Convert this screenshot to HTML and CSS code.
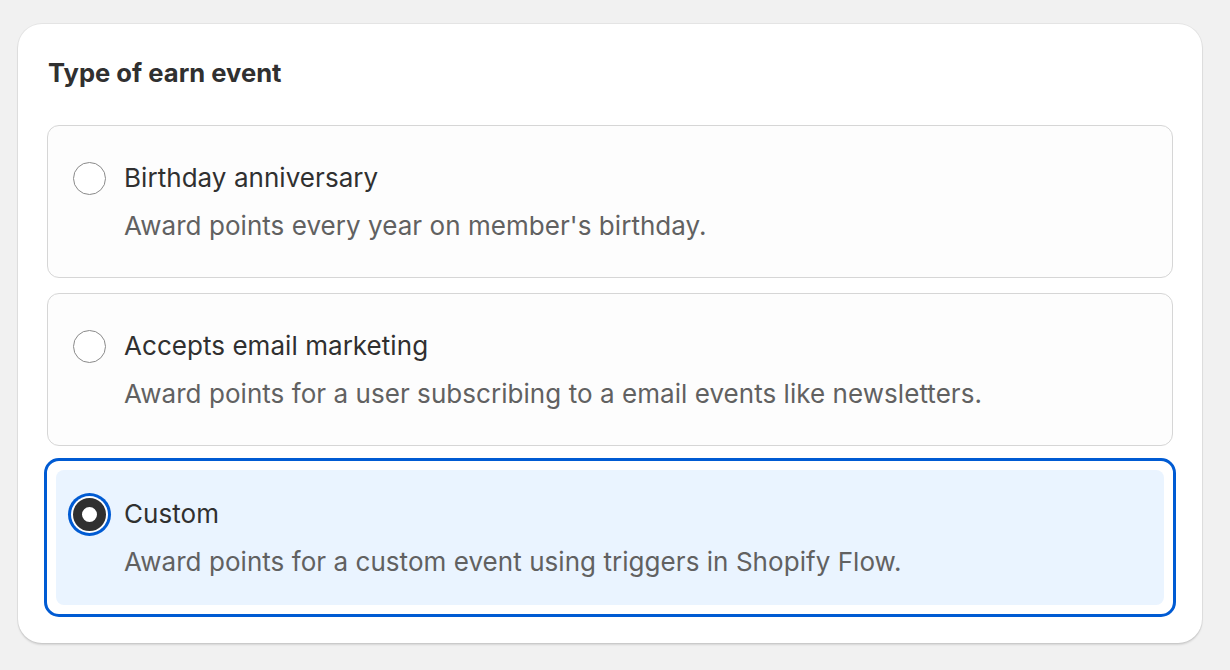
FILE: index.html
```html
<!DOCTYPE html>
<html lang="en">

<head>
    <meta charset="UTF-8">
    <meta name="viewport" content="width=device-width, initial-scale=1.0">
    <title>Type of earn event</title>
    <link rel="stylesheet" href="styles.css">
</head>

<body>
    <div class="card">
        <div class="title">Type of earn event</div>
        <div class="options">
            <label class="option">
                <input type="radio" name="event">
                <span class="text">
                    <span class="label">Birthday anniversary</span>
                    <span class="desc">Award points every year on member's birthday.</span>
                </span>
            </label>
            <label class="option">
                <input type="radio" name="event">
                <span class="text">
                    <span class="label">Accepts email marketing</span>
                    <span class="desc">Award points for a user subscribing to a email events like newsletters.</span>
                </span>
            </label>
            <!-- 选中的选项 -->
            <label class="option selected">
                <input type="radio" name="event" checked>
                <span class="text">
                    <span class="label">Custom</span>
                    <span class="desc">Award points for a custom event using triggers in Shopify Flow.</span>
                </span>
            </label>
        </div>
    </div>
</body>

</html>
```

FILE: styles.css
```css
body {
    margin: 0;
    padding: 24px 28px 26px 18px;
    background-color: #f1f1f1;
    font-family: Inter, "Noto Sans", sans-serif;
    color: #303030;
}

.card {
    background-color: white;
    border-radius: 24px;
    padding: 29px;
    box-shadow: 0 0 0 1px rgba(0, 0, 0, 0.05), 0 2px 2px rgba(0, 0, 0, 0.12);
}

.title {
    font-size: 25.6px;
    font-weight: 650;
    line-height: 40px;
    margin-bottom: 32px;
    padding-left: 1px;
}

.options {
    display: flex;
    flex-direction: column;
    gap: 15px;
}

.option {
    position: relative;
    display: flex;
    align-items: flex-start;
    gap: 18px;
    padding: 32px 25px 31px 25px;
    border: 1px solid #d6d6d6;
    border-radius: 12px;
    background-color: #fdfdfd;
}

.option.selected {
    border-color: white;
    background-color: white;
    outline: 3px solid #005bd3;
}

/* 选中时里面的浅蓝底色 */
.option.selected::before {
    content: '';
    position: absolute;
    top: 8px;
    left: 8px;
    right: 8px;
    bottom: 8px;
    border-radius: 8px;
    background-color: #eaf4ff;
}

.option input {
    appearance: none;
    position: relative;
    flex: none;
    width: 33px;
    height: 33px;
    margin: 4px 0 0 0;
    border: 1px solid #8a8a8a;
    border-radius: 50%;
    background-color: white;
}

.option input:checked {
    border: 9.5px solid #303030;
    box-shadow: 0 0 0 2px white, 0 0 0 5px #005bd3;
}

.text {
    position: relative;
    display: flex;
    flex-direction: column;
    gap: 8px;
    letter-spacing: 0.05px;
}

.label {
    font-size: 26px;
    line-height: 40px;
}

.desc {
    font-size: 26px;
    line-height: 40px;
    color: #616161;
}
```
